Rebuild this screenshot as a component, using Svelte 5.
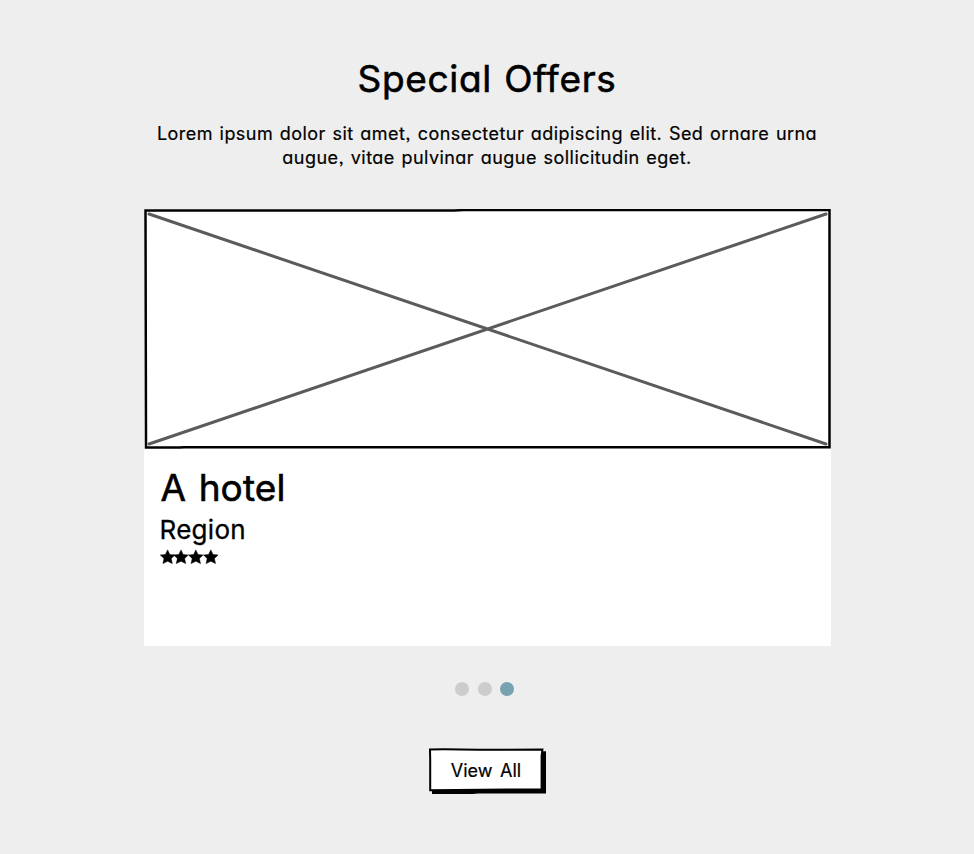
<script>
  const stars = [7.6, 21, 35.8, 50.8];
  const slides = [false, false, true];
</script>

<main>
  <h1>Special Offers</h1>
  <p class="intro">
    <span>Lorem ipsum dolor sit amet, consectetur adipiscing elit. Sed ornare urna</span>
    <span>augue, vitae pulvinar augue sollicitudin eget.</span>
  </p>

  <article>
    <svg class="photo" width="687" height="240" viewBox="0 0 687 240" fill="none" stroke-linecap="round" stroke-linejoin="round">
      <path d="M1.5 1.5 L310 1.5 L320 1.1 L685.5 1.1 V238.2 L40 238.2 L36 238.6 L2 238.5 Z" fill="#fff" stroke="#000" stroke-width="2.5" stroke-linejoin="miter" />
      <path d="M5 5 L682 235 M682 5 L5 235" stroke="#5b5b5b" stroke-width="3" />
    </svg>
    <div class="details">
      <h2>A hotel</h2>
      <h3>Region</h3>
      <svg class="stars" width="60" height="16" viewBox="0 0 60 16">
        {#each stars as x}
          <path transform={`translate(${x} 8.2)`} d="M0 -7.3 L2.2 -2.7 L7.3 -2.2 L3.6 1.4 L4.7 6.4 L0 4 L-4.7 6.4 L-3.6 1.4 L-7.3 -2.2 L-2.2 -2.7 Z" stroke="#000" stroke-width=".5" stroke-linejoin="round" />
        {/each}
      </svg>
    </div>
  </article>

  <nav aria-label="Slides">
    {#each slides as active}
      <button class="dot" class:active aria-label="Slide"></button>
    {/each}
  </nav>

  <button class="all">
    <svg width="118" height="47" viewBox="0 0 118 47" aria-hidden="true">
      <path d="M4 41 H112 V3.2 H118 V45.5 L50 45.5 L45 46 H4 Z" fill="#000" />
      <path d="M2 1.4 L16 1.3 L50 1.7 L114.4 1.6 L113.6 8 V41.2 L80 41.5 L2.2 42.3 V12 Z" fill="#fff" stroke="#000" stroke-width="2" />
    </svg>
    <span>View All</span>
  </button>
</main>

<style>
  :global(body) { background: #eee; }
  main {
    height: 854px;
    box-sizing: border-box;
    padding-top: 54px;
    display: flex;
    flex-direction: column;
    align-items: center;
    background: #eee;
    color: #000;
    font-family: Inter, "Open Sans", sans-serif;
    font-feature-settings: "cv11", "ss03";
    -webkit-text-stroke: 0.2px #000;
  }
  h1, h2, h3, p { margin: 0; font-weight: 400; white-space: nowrap; }
  h1, h2 { -webkit-text-stroke-width: 0.6px; }
  h1 { font-size: 37px; line-height: 50px; letter-spacing: 0.7px; word-spacing: 1px; }
  .intro { margin-top: 18px; font-size: 18px; line-height: 24px; }
  .intro span { display: block; text-align: center; letter-spacing: 0.45px; word-spacing: 1.2px; }
  article { width: 687px; height: 437px; margin-top: 39px; background: #fff; }
  .photo { display: block; }
  .details { padding: 14px 16px; display: flex; flex-direction: column; align-items: flex-start; }
  h2 { padding-left: 1px; font-size: 37px; line-height: 50px; word-spacing: 2px; letter-spacing: 0.1px; }
  h3 { font-size: 26px; line-height: 34px; letter-spacing: 0.3px; -webkit-text-stroke-width: 0.3px; }
  .stars { margin-top: 2px; }
  button { border: 0; padding: 0; background: none; font: inherit; color: inherit; }
  nav { display: flex; gap: 8.5px; margin: 36px 5px 0 0; }
  .dot { width: 14px; height: 14px; border-radius: 50%; background: #ccc; }
  .active { background: #76a3af; }
  .all { display: grid; margin-top: 52px; width: 118px; height: 47px; }
  .all svg, .all span { grid-area: 1 / 1; }
  .all span { position: relative; padding-top: 2px; width: 116px; font-size: 18px; line-height: 42px; text-align: center; word-spacing: 2.5px; }
</style>
